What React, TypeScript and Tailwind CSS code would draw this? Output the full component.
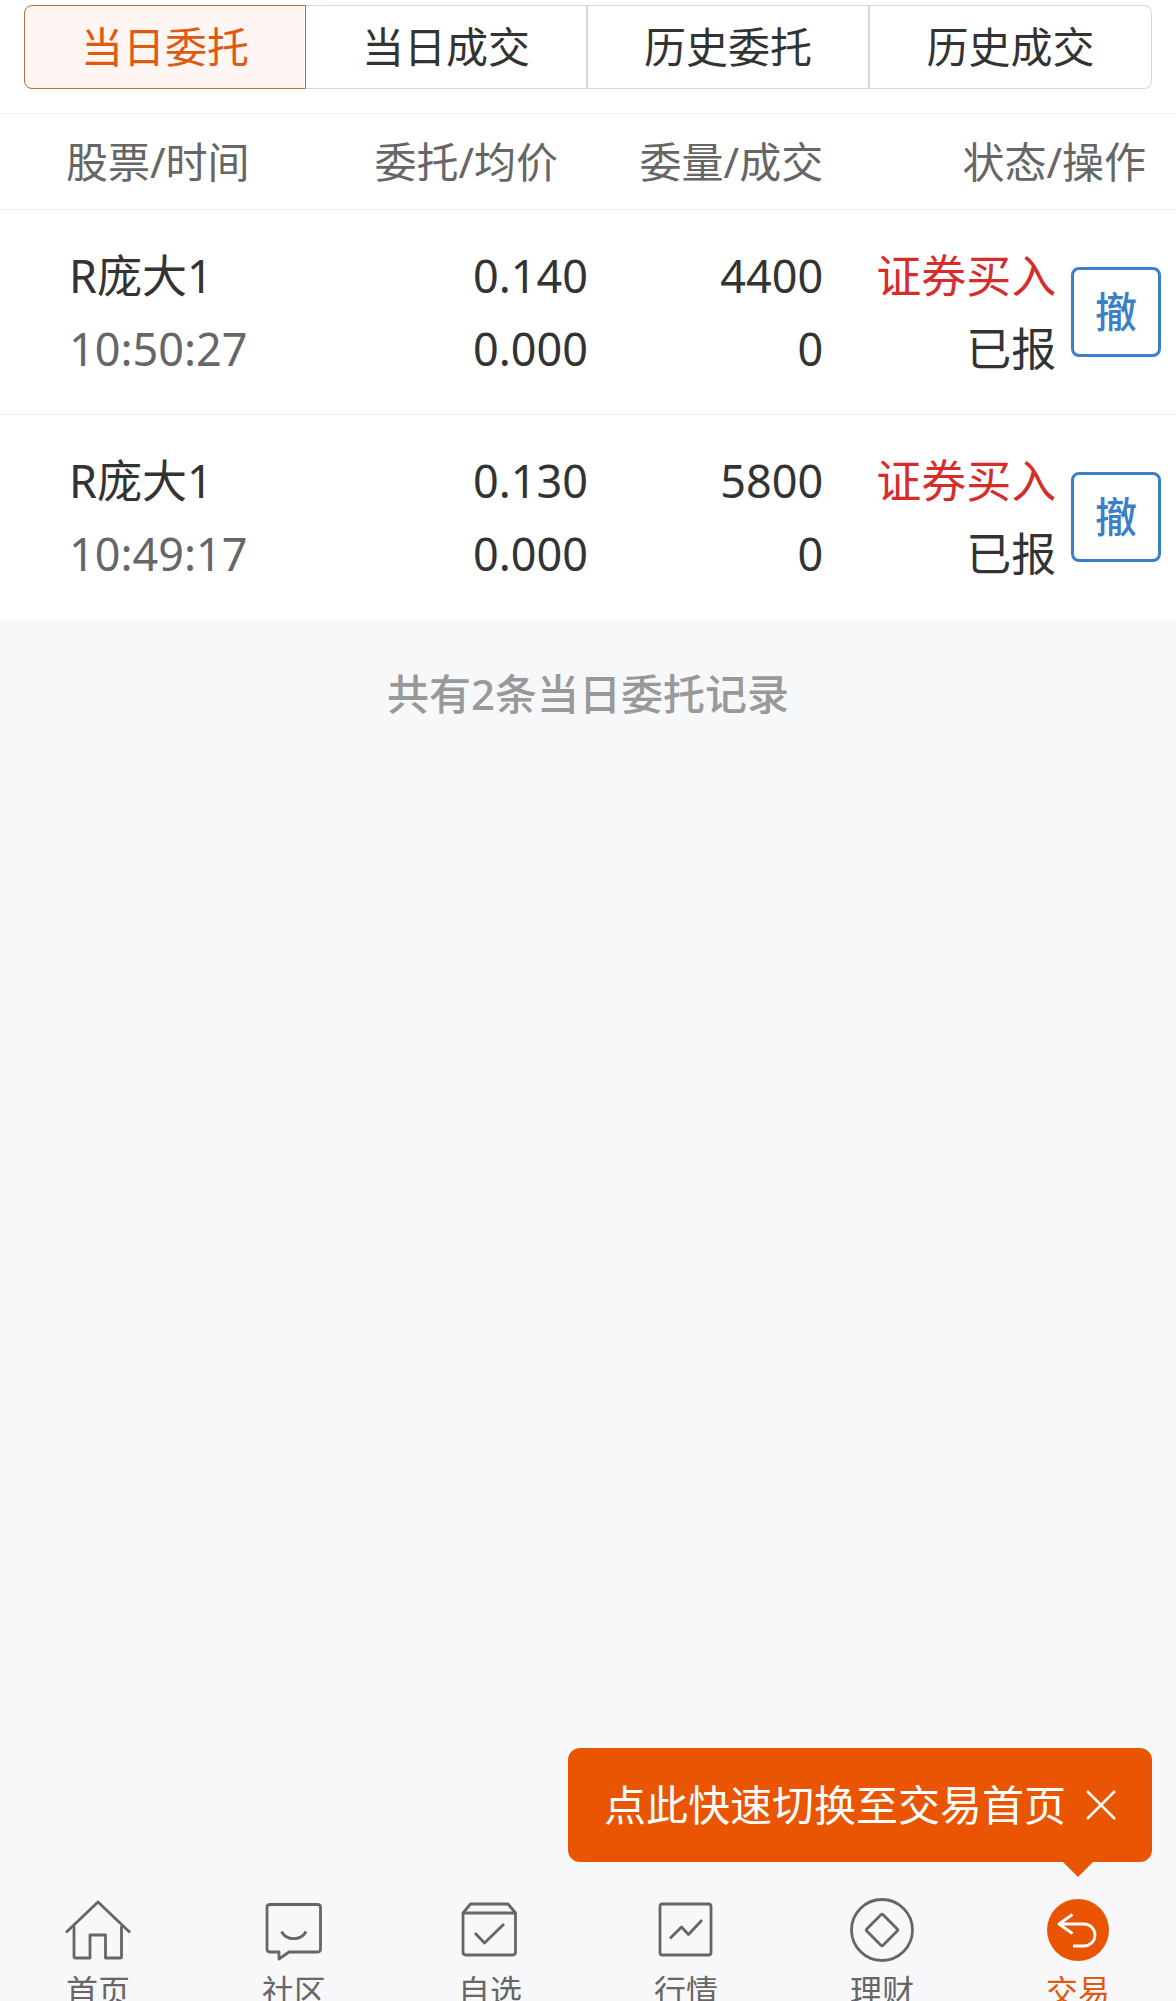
import { useState } from "react";
import type { ReactNode } from "react";

interface Order {
  id: number;
  name: string;
  time: string;
  price: string;
  average: string;
  amount: string;
  filled: string;
  side: string;
  status: string;
}

interface NavItem {
  label: string;
  active?: boolean;
  icon: ReactNode;
}

const TABS = ["当日委托", "当日成交", "历史委托", "历史成交"];

const ORDERS: Order[] = [
  {
    id: 1,
    name: "R庞大1",
    time: "10:50:27",
    price: "0.140",
    average: "0.000",
    amount: "4400",
    filled: "0",
    side: "证券买入",
    status: "已报",
  },
  {
    id: 2,
    name: "R庞大1",
    time: "10:49:17",
    price: "0.130",
    average: "0.000",
    amount: "5800",
    filled: "0",
    side: "证券买入",
    status: "已报",
  },
];

const NAV_ITEMS: NavItem[] = [
  {
    label: "首页",
    icon: (
      <>
        <path d="M4 38.5 36 8l32 30.5" />
        <path d="M12 32v30.5q0 1.5 1.5 1.5H28V41h15.5v23H58q1.5 0 1.5-1.5V32" />
      </>
    ),
  },
  {
    label: "社区",
    icon: (
      <>
        <path d="M12 10.5h47.5q3 0 3 3V55q0 3-3 3H31l-10 7v-7h-9q-3 0-3-3V13.5q0-3 3-3z" />
        <path d="M23.5 37.5c5 9.5 19.5 9.5 24.500 0" />
      </>
    ),
  },
  {
    label: "自选",
    icon: (
      <>
        <path d="M9 19l7.5-9H54l7.5 9v39q0 3-3 3H12q-3 0-3-3zM9 19h52.5" />
        <path d="M21 39l9.5 10L50 30" />
      </>
    ),
  },
  {
    label: "行情",
    icon: (
      <>
        <rect x="10" y="10" width="51" height="51" rx="2.5" />
        <path d="M20 44.5 31.5 33l7 7.5L52 26" />
      </>
    ),
  },
  {
    label: "理财",
    icon: (
      <>
        <circle cx="36" cy="36" r="30.5" />
        <rect x="24.5" y="24.5" width="23" height="23" rx="1.5" transform="rotate(45 36 36)" />
      </>
    ),
  },
  {
    label: "交易",
    active: true,
    icon: (
      <>
        <circle cx="36" cy="36" r="31" fill="#ea5504" stroke="none" />
        <path d="M30.5 20.5 17 30l13.5 9.5M17 30h25a11 11 0 0 1 0 22H31" stroke="#fff" />
      </>
    ),
  },
];

function OrderTabs() {
  const [active, setActive] = useState(0);

  return (
    <div className="px-6 pt-[5px] pb-6">
      <div className="grid grid-cols-4">
        {TABS.map((tab, i) => (
          <button
            key={tab}
            type="button"
            onClick={() => setActive(i)}
            className={`h-[84px] border-y border-r first:border-l first:rounded-l-lg last:rounded-r-lg text-[42px] leading-[60px] cursor-pointer ${
              i === active
                ? "border-[#b5703f] bg-[#fff5f2] text-[#dd5a12]"
                : "border-[#d5d7d8] bg-white text-[#333333] not-last:border-r-2"
            }`}
          >
            {tab}
          </button>
        ))}
      </div>
    </div>
  );
}

function OrderRow({ order }: { order: Order }) {
  return (
    <tr className="h-[205px] border-b border-[#ebebeb] last:border-b-0 text-right text-[45px] leading-[73px] text-[#333333]">
      <td className="pl-[69px] text-left">
        <div>{order.name}</div>
        <div className="text-[#666666]">{order.time}</div>
      </td>
      <td>
        <div>{order.price}</div>
        <div>{order.average}</div>
      </td>
      <td>
        <div>{order.amount}</div>
        <div>{order.filled}</div>
      </td>
      <td className="whitespace-nowrap pr-0.5">
        <div className="text-[#d62c2c]">{order.side}</div>
        <div>{order.status}</div>
      </td>
      <td className="pr-[15px]">
        <button
          type="button"
          className="ml-auto flex size-[90px] items-center justify-center rounded-lg border-3 border-[#3a7fc8] text-[42px] leading-[60px] font-medium text-[#3a7fc8] cursor-pointer"
        >
          撤
        </button>
      </td>
    </tr>
  );
}

function OrderTable() {
  return (
    <table className="w-full table-fixed border-collapse border-t border-[#f5f5f5]">
      <colgroup>
        <col className="w-[25%]" />
        <col className="w-[25%]" />
        <col className="w-[20%]" />
        <col className="w-[20%]" />
        <col className="w-[10%]" />
      </colgroup>
      <thead>
        <tr className="h-[96px] border-b border-[#ebebeb] text-right text-[42px] leading-[60px] text-[#666666]">
          <th className="pl-[66px] text-left font-normal">股票/时间</th>
          <th className="pr-[30px] font-normal">委托/均价</th>
          <th className="font-normal">委量/成交</th>
          <th colSpan={2} className="pr-[30px] font-normal">
            状态/操作
          </th>
        </tr>
      </thead>
      <tbody>
        {ORDERS.map((order) => (
          <OrderRow key={order.id} order={order} />
        ))}
      </tbody>
    </table>
  );
}

function TradeTip({ onClose }: { onClose: () => void }) {
  return (
    <div className="absolute right-6 bottom-full mb-[26px] flex h-[114px] items-center gap-5 rounded-xl bg-[#ea5504] px-9 text-[42px] leading-[60px] whitespace-nowrap text-white">
      <span>点此快速切换至交易首页</span>
      <button type="button" aria-label="关闭" onClick={onClose} className="cursor-pointer">
        <svg viewBox="0 0 30 30" className="size-[30px]" fill="none" stroke="currentColor" strokeWidth="2.5">
          <path d="M1 1l28 28M29 1 1 29" />
        </svg>
      </button>
      <svg viewBox="0 0 30 15" className="absolute top-full right-[59px] h-[15px] w-[30px]">
        <path d="M0 0h30L15 15z" fill="#ea5504" />
      </svg>
    </div>
  );
}

function BottomNav() {
  const [tipOpen, setTipOpen] = useState(true);

  return (
    <nav className="relative h-[113px] shrink-0 bg-[#f8f8fa]">
      {tipOpen && <TradeTip onClose={() => setTipOpen(false)} />}
      <div className="grid grid-cols-6 pt-[6px]">
        {NAV_ITEMS.map((item) => (
          <a
            key={item.label}
            href="#"
            className={`flex flex-col items-center text-[32px] leading-[50px] ${
              item.active ? "text-[#dd5a12]" : "text-[#666666]"
            }`}
          >
            <svg
              viewBox="0 0 72 72"
              className="size-[72px]"
              fill="none"
              stroke="currentColor"
              strokeWidth="2.8"
              strokeLinejoin="round"
            >
              {item.icon}
            </svg>
            {item.label}
          </a>
        ))}
      </div>
    </nav>
  );
}

export default function App() {
  return (
    <div className="flex h-screen flex-col overflow-hidden bg-[#f7f8fa] font-['Noto_Sans','Noto_Sans_CJK_SC',sans-serif]">
      <main className="min-h-0 flex-1">
        <section className="bg-white">
          <OrderTabs />
          <OrderTable />
        </section>
        <p className="pt-11 text-center text-[42px] leading-[60px] font-medium text-[#999999]">
          共有{ORDERS.length}条当日委托记录
        </p>
      </main>
      <BottomNav />
    </div>
  );
}
